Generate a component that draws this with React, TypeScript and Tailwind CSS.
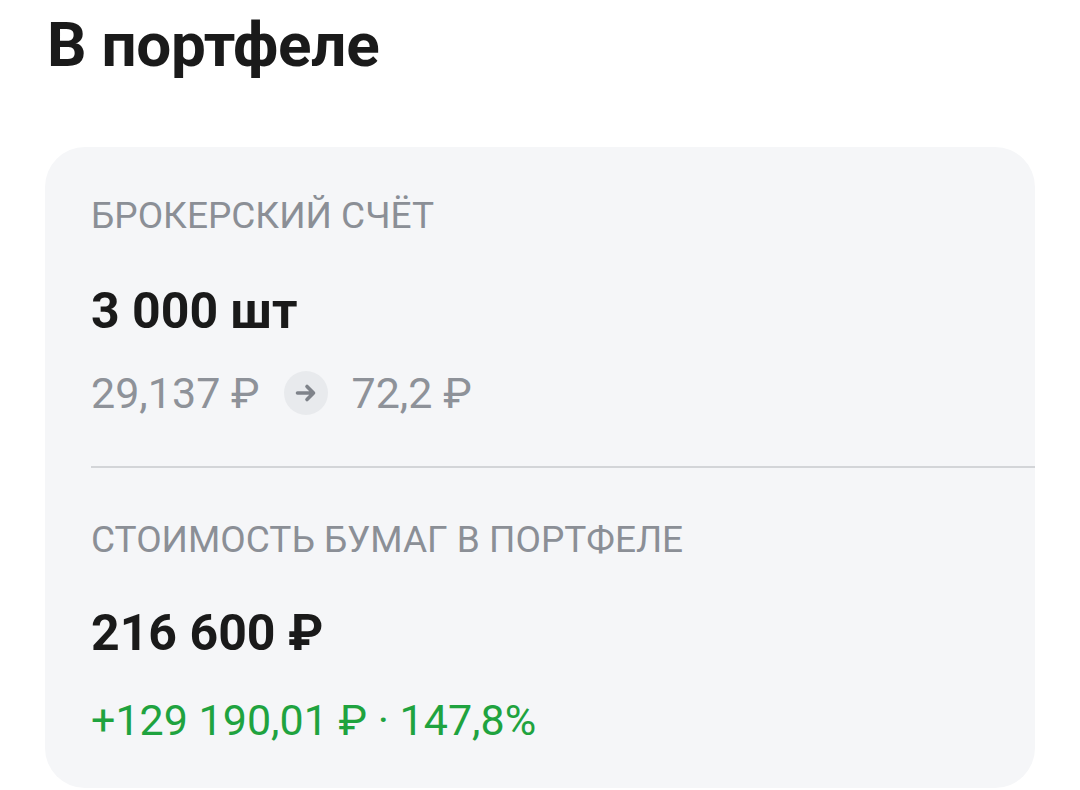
import { ReactNode } from "react";

const Label = ({ children, className }: { children: ReactNode; className?: string }) => (
  <div className={`text-[37px] leading-[44px] text-[#8b8f96] ${className ?? ""}`}>{children}</div>
);

const ArrowCircle = () => (
  <div className="flex items-center justify-center w-[44px] h-[44px] rounded-full bg-[#e8eaed]">
    <svg width="22" height="20" viewBox="0 0 22 20" fill="none">
      <path
        d="M2.5 10h16M12 3.5L18.5 10 12 16.5"
        stroke="#7f838a"
        strokeWidth="3.6"
        strokeLinecap="round"
        strokeLinejoin="round"
      />
    </svg>
  </div>
);

const App = () => {
  return (
    <div className="w-[1080px] h-[790px] bg-white overflow-hidden font-['Roboto',sans-serif] px-[45px]">
      <h1 className="pt-[14px] pl-[2px] text-[62px] leading-[62px] font-bold text-[#1a1a1a] tracking-[-0.3px]">
        В портфеле
      </h1>

      <div className="mt-[71px] bg-[#f5f6f8] rounded-[40px] pl-[46px] pt-[47px] pb-[44px]">
        <Label>БРОКЕРСКИЙ СЧЁТ</Label>
        <div className="mt-[44px] text-[50px] leading-[58px] font-bold text-[#1a1a1a]">3 000 шт</div>
        <div className="mt-[29px] flex items-center gap-[24px] text-[43px] leading-[48px] text-[#8e9299]">
          <span>29,137 ₽</span>
          <ArrowCircle />
          <span>72,2 ₽</span>
        </div>

        <div className="mt-[49px] h-[2px] bg-[#d3d5d8]" />

        <Label className="mt-[50px]">СТОИМОСТЬ БУМАГ В ПОРТФЕЛЕ</Label>
        <div className="mt-[42px] text-[50px] leading-[58px] font-bold text-[#1a1a1a]">216 600 ₽</div>
        <div className="mt-[34px] text-[43px] leading-[48px] text-[#1fa33f]">+129 190,01 ₽ · 147,8%</div>
      </div>
    </div>
  );
};

export default App;
